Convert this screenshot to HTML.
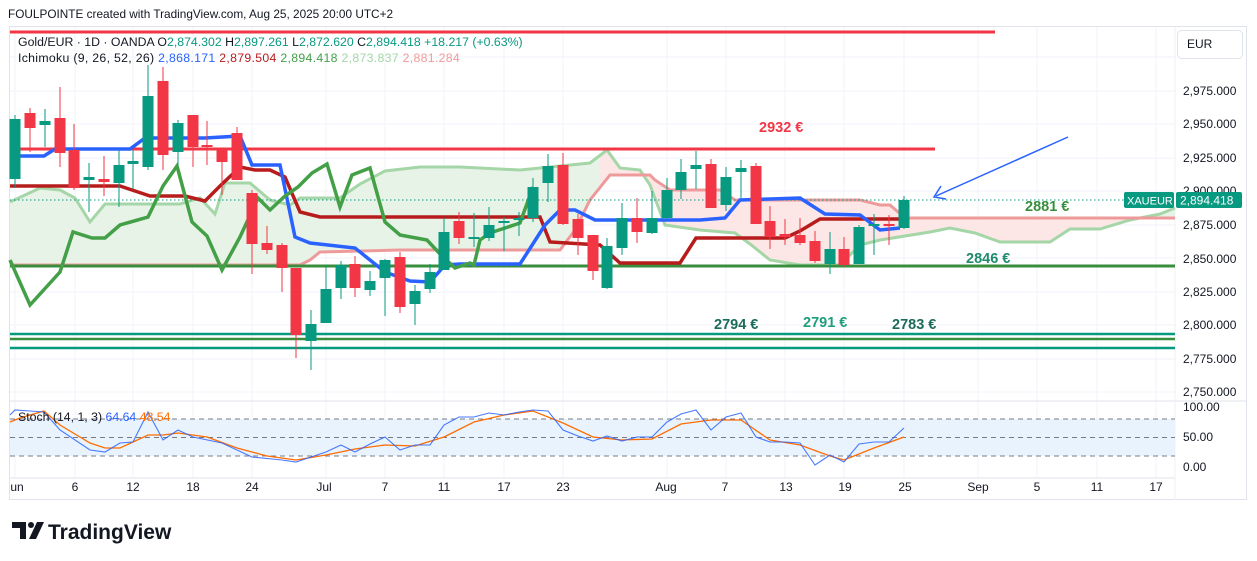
<!DOCTYPE html>
<html><head><meta charset="utf-8"><style>
html,body{margin:0;padding:0;background:#fff;width:1257px;height:561px;overflow:hidden;font-family:"Liberation Sans",sans-serif}
svg text{font-family:"Liberation Sans",sans-serif}
</style></head><body>
<svg width="1257" height="561" viewBox="0 0 1257 561" xmlns="http://www.w3.org/2000/svg">
<text x="8" y="18" font-size="11.8" fill="#131722">FOULPOINTE created with TradingView.com, Aug 25, 2025 20:00 UTC+2</text>
<rect x="9.5" y="26.5" width="1237" height="473" fill="none" stroke="#e0e3eb"/>
<g stroke="#f0f3fa" stroke-width="1">
<line x1="10" y1="57" x2="1175" y2="57"/><line x1="10" y1="91" x2="1175" y2="91"/><line x1="10" y1="124" x2="1175" y2="124"/><line x1="10" y1="158" x2="1175" y2="158"/><line x1="10" y1="191" x2="1175" y2="191"/><line x1="10" y1="225" x2="1175" y2="225"/><line x1="10" y1="258" x2="1175" y2="258"/><line x1="10" y1="292" x2="1175" y2="292"/><line x1="10" y1="325" x2="1175" y2="325"/><line x1="10" y1="359" x2="1175" y2="359"/><line x1="10" y1="392" x2="1175" y2="392"/>
<line x1="15" y1="27" x2="15" y2="478"/><line x1="75" y1="27" x2="75" y2="478"/><line x1="133" y1="27" x2="133" y2="478"/><line x1="193" y1="27" x2="193" y2="478"/><line x1="252" y1="27" x2="252" y2="478"/><line x1="326" y1="27" x2="326" y2="478"/><line x1="385" y1="27" x2="385" y2="478"/><line x1="444" y1="27" x2="444" y2="478"/><line x1="504" y1="27" x2="504" y2="478"/><line x1="563" y1="27" x2="563" y2="478"/><line x1="667" y1="27" x2="667" y2="478"/><line x1="726" y1="27" x2="726" y2="478"/><line x1="785" y1="27" x2="785" y2="478"/><line x1="844" y1="27" x2="844" y2="478"/><line x1="904" y1="27" x2="904" y2="478"/><line x1="978" y1="27" x2="978" y2="478"/><line x1="1037" y1="27" x2="1037" y2="478"/><line x1="1097" y1="27" x2="1097" y2="478"/><line x1="1156" y1="27" x2="1156" y2="478"/>
</g>
<line x1="10" y1="401" x2="1247" y2="401" stroke="#e0e3eb"/>
<line x1="10" y1="478" x2="1175" y2="478" stroke="#e0e3eb"/>
<line x1="1175" y1="27" x2="1175" y2="500" stroke="#eef0f4"/>
<defs>
<clipPath id="cg"><rect x="0" y="0" width="600" height="400"/><rect x="1140" y="0" width="40" height="400"/></clipPath>
<clipPath id="cr"><rect x="600" y="0" width="540" height="400"/></clipPath>
</defs>
<polygon clip-path="url(#cg)" fill="#e8f3e8" points="10,202 40,188 60,190 75,198 90,222 105,204 180,204 200,198 215,214 225,183 250,183 270,200 290,205 300,198 340,198 360,184 385,171 420,167 460,167 520,170 590,163 607,150 620,168 640,170 650,185 665,225 700,230 735,233 750,244 770,260 800,265 840,265 860,245 880,240 930,232 950,228 975,233 1000,242 1050,242 1070,229 1100,229 1130,220 1160,214 1175,208 1175,218 905,218 890,205 880,205 860,200 790,200 735,200 720,190 670,190 655,180 650,175 610,175 590,200 575,230 560,250 400,250 320,252 310,260 300,265 10,265"/>
<polygon clip-path="url(#cr)" fill="#fce6e6" points="10,202 40,188 60,190 75,198 90,222 105,204 180,204 200,198 215,214 225,183 250,183 270,200 290,205 300,198 340,198 360,184 385,171 420,167 460,167 520,170 590,163 607,150 620,168 640,170 650,185 665,225 700,230 735,233 750,244 770,260 800,265 840,265 860,245 880,240 930,232 950,228 975,233 1000,242 1050,242 1070,229 1100,229 1130,220 1160,214 1175,208 1175,218 905,218 890,205 880,205 860,200 790,200 735,200 720,190 670,190 655,180 650,175 610,175 590,200 575,230 560,250 400,250 320,252 310,260 300,265 10,265"/>
<polyline fill="none" stroke="#a5d6a7" stroke-width="3" points="10,202 40,188 60,190 75,198 90,222 105,204 180,204 200,198 215,214 225,183 250,183 270,200 290,205 300,198 340,198 360,184 385,171 420,167 460,167 520,170 590,163 607,150 620,168 640,170 650,185 665,225 700,230 735,233 750,244 770,260 800,265 840,265 860,245 880,240 930,232 950,228 975,233 1000,242 1050,242 1070,229 1100,229 1130,220 1160,214 1175,208"/>
<polyline fill="none" stroke="#ef9a9a" stroke-width="3" points="10,265 300,265 310,260 320,252 400,250 560,250 575,230 590,200 610,175 650,175 655,180 670,190 720,190 735,200 790,200 860,200 880,205 890,205 905,218 1175,218"/>
<line x1="10" y1="32" x2="995" y2="32" stroke="#f23645" stroke-width="3"/>
<line x1="10" y1="149" x2="935" y2="149" stroke="#f23645" stroke-width="3"/>
<line x1="10" y1="266" x2="1175" y2="266" stroke="#388e3c" stroke-width="3"/>
<line x1="10" y1="334" x2="1175" y2="334" stroke="#089981" stroke-width="2.5"/>
<line x1="10" y1="339" x2="1175" y2="339" stroke="#388e3c" stroke-width="2.5"/>
<line x1="10" y1="348" x2="1175" y2="348" stroke="#089981" stroke-width="2.5"/>
<line x1="10" y1="200" x2="1124" y2="200" stroke="#089981" stroke-width="1" stroke-dasharray="1.5,2.5"/>
<polyline fill="none" stroke="#b71c1c" stroke-width="3.5" points="10,186 100,186 120,186 135,191 150,196 185,196 205,201 220,186 240,167 255,170 270,170 285,177 300,212 320,217 540,217 550,242 600,245 620,263 680,263 696,238 785,238 800,231 820,219 905,219"/>
<polyline fill="none" stroke="#2962ff" stroke-width="3.5" points="10,156 44,156 55,149 130,149 145,138 205,138 240,136 252,165 280,165 295,237 310,243 355,248 385,272 410,281 430,282 445,265 460,264 520,264 545,225 560,210 575,210 595,220 700,220 725,218 740,200 800,198 825,214 860,215 880,230 900,228"/>
<polyline fill="none" stroke="#43a047" stroke-width="3.5" points="10,260 30,305 60,272 73,232 92,238 105,238 120,225 148,217 163,186 177,166 192,222 207,236 222,270 240,237 258,198 270,210 285,196 298,187 312,173 327,164 340,207 352,175 370,168 385,222 400,235 427,240 440,254 455,268 470,263 474,265 480,240 490,233 520,223 533,187"/>
<g id="c"></g>
<line x1="1068" y1="137" x2="936" y2="196" stroke="#2962ff" stroke-width="1.5"/>
<polyline fill="none" stroke="#2962ff" stroke-width="1.5" points="941,186 934,197 946,199"/>
<g font-weight="bold" font-size="14.5">
<text x="759" y="132" fill="#f23645">2932 €</text>
<text x="1025" y="211" fill="#388e3c">2881 €</text>
<text x="966" y="263" fill="#1e8b6d">2846 €</text>
<text x="714" y="329" fill="#1b6b5a">2794 €</text>
<text x="803" y="327" fill="#1e9e7a">2791 €</text>
<text x="892" y="329" fill="#1b6b5a">2783 €</text>
</g>
<g font-size="12.3">
<text x="18" y="46" fill="#131722">Gold/EUR · 1D · OANDA  <tspan>O</tspan><tspan fill="#089981">2,874.302</tspan>  <tspan>H</tspan><tspan fill="#089981">2,897.261</tspan>  <tspan>L</tspan><tspan fill="#089981">2,872.620</tspan>  <tspan>C</tspan><tspan fill="#089981">2,894.418</tspan><tspan fill="#089981">  +18.217 (+0.63%)</tspan></text>
<text x="18" y="62" fill="#131722" letter-spacing="0.3">Ichimoku (9, 26, 52, 26) <tspan fill="#2962ff"> 2,868.171</tspan><tspan fill="#b71c1c">  2,879.504</tspan><tspan fill="#43a047">  2,894.418</tspan><tspan fill="#a5d6a7">  2,873.837</tspan><tspan fill="#ef9a9a">  2,881.284</tspan></text>
</g>
<rect x="10" y="419" width="1165" height="37" fill="#e8f3fd"/>
<g stroke="#787b86" stroke-dasharray="5,4" stroke-width="1"><line x1="10" y1="419" x2="1175" y2="419"/><line x1="10" y1="437.5" x2="1175" y2="437.5"/><line x1="10" y1="456" x2="1175" y2="456"/></g>
<polyline fill="none" stroke="#ff6d00" stroke-width="1.3" points="10,422 20,418 30,415 44,411 60,425 90,443 105,448 120,448 148,435 163,435 178,433 207,437 237,448 267,456 296,460 326,455 355,449 385,445 415,446 444,437 474,422 504,415 533,411 563,423 593,437 622,440 652,439 681,424 711,420 741,420 770,440 800,445 830,456 844,460 874,448 904,437"/>
<polyline fill="none" stroke="#2962ff" stroke-width="1.1" stroke-opacity="0.85" points="10,415 15,410 30,411 44,412 60,430 90,450 105,452 120,443 133,442 148,412 163,440 178,430 193,437 222,443 252,457 282,460 296,462 311,457 326,452 341,445 355,452 370,444 385,437 400,450 415,445 430,445 444,425 459,417 474,417 489,413 504,415 519,412 533,410 548,411 563,430 578,436 593,441 607,436 622,441 637,437 652,437 667,422 681,414 696,410 711,430 726,417 741,413 756,437 770,442 785,442 800,443 815,465 830,455 844,462 859,444 874,442 889,442 904,428"/>
<text x="18" y="421" font-size="12.3" fill="#131722">Stoch (14, 1, 3) <tspan fill="#2962ff"> 64.64</tspan><tspan fill="#ff6d00">  48.54</tspan></text>
<rect x="1177.5" y="30.5" width="65" height="28" rx="4" fill="#fff" stroke="#e0e3eb"/>
<text x="1187" y="48" font-size="12" fill="#131722">EUR</text>
<g font-size="12" fill="#131722">
<text x="1183" y="95">2,975.000</text><text x="1183" y="128">2,950.000</text><text x="1183" y="162">2,925.000</text><text x="1183" y="195">2,900.000</text><text x="1183" y="229">2,875.000</text><text x="1183" y="263">2,850.000</text><text x="1183" y="296">2,825.000</text><text x="1183" y="329">2,800.000</text><text x="1183" y="363">2,775.000</text><text x="1183" y="396">2,750.000</text>
<text x="1183" y="411">100.00</text><text x="1183" y="441">50.00</text><text x="1183" y="471">0.00</text>
</g>
<rect x="1124" y="192" width="50" height="16" rx="2" fill="#089981"/>
<text x="1127" y="204.5" font-size="11" fill="#fff">XAUEUR</text>
<rect x="1176" y="192" width="66" height="16" rx="2" fill="#089981"/>
<text x="1180" y="204.5" font-size="12" fill="#fff">2,894.418</text>
<g font-size="12" fill="#131722" text-anchor="middle">
<text x="17" y="491">un</text><text x="75" y="491">6</text><text x="133" y="491">12</text><text x="193" y="491">18</text><text x="252" y="491">24</text><text x="324" y="491">Jul</text><text x="385" y="491">7</text><text x="444" y="491">11</text><text x="504" y="491">17</text><text x="563" y="491">23</text><text x="666" y="491">Aug</text><text x="725" y="491">7</text><text x="786" y="491">13</text><text x="845" y="491">19</text><text x="905" y="491">25</text><text x="978" y="491">Sep</text><text x="1037" y="491">5</text><text x="1097" y="491">11</text><text x="1156" y="491">17</text>
</g>
<path d="M12 522h14v17h-6v-11h-8z" fill="#131722"/>
<circle cx="31" cy="525" r="3" fill="#131722"/>
<path d="M37 522h7l-8 17h-7z" fill="#131722"/>
<text x="48" y="539" font-size="21" font-weight="bold" fill="#131722">TradingView</text>
</svg>
<script>
var d=[[15,'g',119,179,115,188],[30,'r',113,128,108,152],[45,'g',121,125,109,147],[60,'r',118,153,87,167],[74,'r',150,188,124,190],[89,'g',177,180,163,212],[104,'r',179,182,156,196],[119,'g',165,183,150,207],[133,'g',161,164,150,189],[148,'g',96,167,65,170],[163,'r',81,155,67,170],[178,'g',123,152,120,165],[193,'r',115,147,115,167],[207,'r',145,147,121,165],[222,'r',150,162,150,195],[237,'r',133,180,127,180],[252,'r',193,244,190,274],[267,'r',243,250,226,254],[282,'r',245,268,243,292],[296,'r',268,335,268,358],[311,'g',324,341,310,370],[326,'g',289,323,265,323],[341,'g',265,288,261,299],[355,'r',264,288,256,297],[370,'g',281,290,271,296],[385,'g',260,278,259,316],[400,'r',257,307,252,313],[415,'g',291,304,285,325],[430,'g',272,289,264,293],[444,'g',232,270,218,270],[459,'r',221,238,212,244],[474,'g',237,239,213,247],[489,'g',225,238,207,241],[504,'g',221,223,217,251],[519,'g',218,220,212,236],[533,'g',187,218,178,222],[548,'g',166,183,154,202],[563,'r',165,224,153,225],[578,'r',219,238,214,255],[593,'r',235,271,235,280],[607,'g',246,288,238,289],[622,'g',218,248,203,255],[637,'r',218,232,198,243],[652,'g',218,233,191,234],[667,'g',190,218,178,220],[681,'g',172,190,159,199],[696,'g',165,169,151,189],[711,'r',164,208,159,208],[726,'g',177,205,167,211],[741,'g',168,172,160,198],[756,'r',166,224,163,224],[770,'r',221,237,206,249],[785,'r',234,237,219,245],[800,'r',235,243,218,245],[815,'r',241,261,231,263],[830,'g',249,264,232,274],[844,'r',249,265,237,267],[859,'g',227,264,225,264],[874,'g',224,226,214,255],[889,'r',224,225,215,245],[904,'g',200,228,196,229]];
var s='';d.forEach(function(c){var col=c[1]=='g'?'#089981':'#f23645';s+='<line x1="'+c[0]+'" x2="'+c[0]+'" y1="'+c[4]+'" y2="'+c[5]+'" stroke="'+col+'" stroke-width="1"/><rect x="'+(c[0]-5.5)+'" y="'+c[2]+'" width="11" height="'+Math.max(2,c[3]-c[2])+'" fill="'+col+'"/>';});
document.getElementById('c').innerHTML=s;
</script>
</body></html>
